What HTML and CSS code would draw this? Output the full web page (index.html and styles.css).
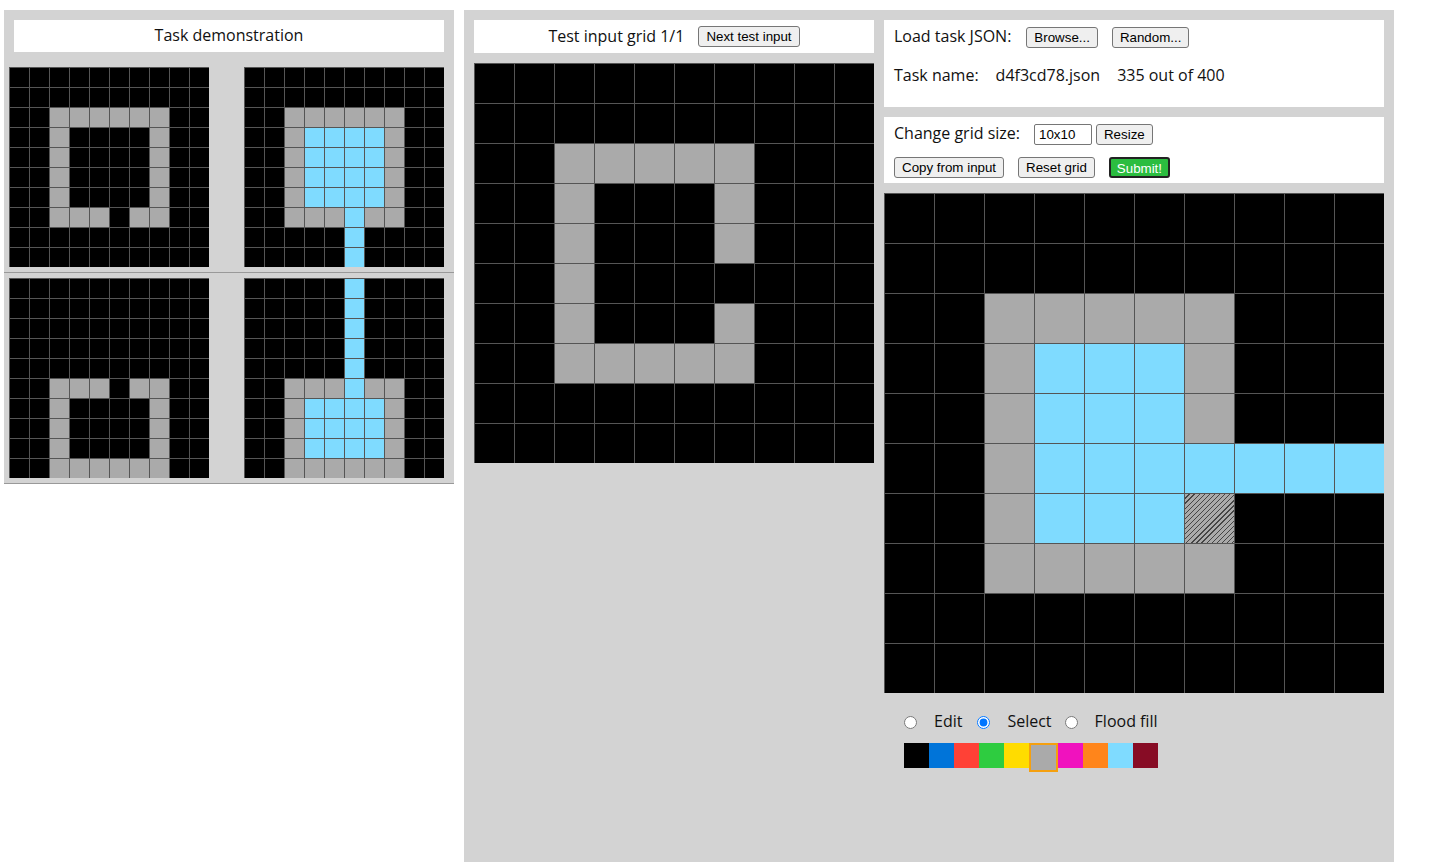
FILE: index.html
```html
<!DOCTYPE html>
<html>
<head>
<meta charset="utf-8">
<title>ARC testing interface</title>
<link rel="stylesheet" href="styles.css">
</head>
<body>
<div class="workspace">
  <section class="demo-panel">
    <div class="demo-title">Task demonstration</div>
    <div class="pair">
      <div class="grid g20">
        <i class="c0"></i><i class="c0"></i><i class="c0"></i><i class="c0"></i><i class="c0"></i><i class="c0"></i><i class="c0"></i><i class="c0"></i><i class="c0"></i><i class="c0"></i>
        <i class="c0"></i><i class="c0"></i><i class="c0"></i><i class="c0"></i><i class="c0"></i><i class="c0"></i><i class="c0"></i><i class="c0"></i><i class="c0"></i><i class="c0"></i>
        <i class="c0"></i><i class="c0"></i><i class="c5"></i><i class="c5"></i><i class="c5"></i><i class="c5"></i><i class="c5"></i><i class="c5"></i><i class="c0"></i><i class="c0"></i>
        <i class="c0"></i><i class="c0"></i><i class="c5"></i><i class="c0"></i><i class="c0"></i><i class="c0"></i><i class="c0"></i><i class="c5"></i><i class="c0"></i><i class="c0"></i>
        <i class="c0"></i><i class="c0"></i><i class="c5"></i><i class="c0"></i><i class="c0"></i><i class="c0"></i><i class="c0"></i><i class="c5"></i><i class="c0"></i><i class="c0"></i>
        <i class="c0"></i><i class="c0"></i><i class="c5"></i><i class="c0"></i><i class="c0"></i><i class="c0"></i><i class="c0"></i><i class="c5"></i><i class="c0"></i><i class="c0"></i>
        <i class="c0"></i><i class="c0"></i><i class="c5"></i><i class="c0"></i><i class="c0"></i><i class="c0"></i><i class="c0"></i><i class="c5"></i><i class="c0"></i><i class="c0"></i>
        <i class="c0"></i><i class="c0"></i><i class="c5"></i><i class="c5"></i><i class="c5"></i><i class="c0"></i><i class="c5"></i><i class="c5"></i><i class="c0"></i><i class="c0"></i>
        <i class="c0"></i><i class="c0"></i><i class="c0"></i><i class="c0"></i><i class="c0"></i><i class="c0"></i><i class="c0"></i><i class="c0"></i><i class="c0"></i><i class="c0"></i>
        <i class="c0"></i><i class="c0"></i><i class="c0"></i><i class="c0"></i><i class="c0"></i><i class="c0"></i><i class="c0"></i><i class="c0"></i><i class="c0"></i><i class="c0"></i>
      </div>
      <div class="grid g20">
        <i class="c0"></i><i class="c0"></i><i class="c0"></i><i class="c0"></i><i class="c0"></i><i class="c0"></i><i class="c0"></i><i class="c0"></i><i class="c0"></i><i class="c0"></i>
        <i class="c0"></i><i class="c0"></i><i class="c0"></i><i class="c0"></i><i class="c0"></i><i class="c0"></i><i class="c0"></i><i class="c0"></i><i class="c0"></i><i class="c0"></i>
        <i class="c0"></i><i class="c0"></i><i class="c5"></i><i class="c5"></i><i class="c5"></i><i class="c5"></i><i class="c5"></i><i class="c5"></i><i class="c0"></i><i class="c0"></i>
        <i class="c0"></i><i class="c0"></i><i class="c5"></i><i class="c8"></i><i class="c8"></i><i class="c8"></i><i class="c8"></i><i class="c5"></i><i class="c0"></i><i class="c0"></i>
        <i class="c0"></i><i class="c0"></i><i class="c5"></i><i class="c8"></i><i class="c8"></i><i class="c8"></i><i class="c8"></i><i class="c5"></i><i class="c0"></i><i class="c0"></i>
        <i class="c0"></i><i class="c0"></i><i class="c5"></i><i class="c8"></i><i class="c8"></i><i class="c8"></i><i class="c8"></i><i class="c5"></i><i class="c0"></i><i class="c0"></i>
        <i class="c0"></i><i class="c0"></i><i class="c5"></i><i class="c8"></i><i class="c8"></i><i class="c8"></i><i class="c8"></i><i class="c5"></i><i class="c0"></i><i class="c0"></i>
        <i class="c0"></i><i class="c0"></i><i class="c5"></i><i class="c5"></i><i class="c5"></i><i class="c8"></i><i class="c5"></i><i class="c5"></i><i class="c0"></i><i class="c0"></i>
        <i class="c0"></i><i class="c0"></i><i class="c0"></i><i class="c0"></i><i class="c0"></i><i class="c8"></i><i class="c0"></i><i class="c0"></i><i class="c0"></i><i class="c0"></i>
        <i class="c0"></i><i class="c0"></i><i class="c0"></i><i class="c0"></i><i class="c0"></i><i class="c8"></i><i class="c0"></i><i class="c0"></i><i class="c0"></i><i class="c0"></i>
      </div>
    </div>
    <div class="pair">
      <div class="grid g20">
        <i class="c0"></i><i class="c0"></i><i class="c0"></i><i class="c0"></i><i class="c0"></i><i class="c0"></i><i class="c0"></i><i class="c0"></i><i class="c0"></i><i class="c0"></i>
        <i class="c0"></i><i class="c0"></i><i class="c0"></i><i class="c0"></i><i class="c0"></i><i class="c0"></i><i class="c0"></i><i class="c0"></i><i class="c0"></i><i class="c0"></i>
        <i class="c0"></i><i class="c0"></i><i class="c0"></i><i class="c0"></i><i class="c0"></i><i class="c0"></i><i class="c0"></i><i class="c0"></i><i class="c0"></i><i class="c0"></i>
        <i class="c0"></i><i class="c0"></i><i class="c0"></i><i class="c0"></i><i class="c0"></i><i class="c0"></i><i class="c0"></i><i class="c0"></i><i class="c0"></i><i class="c0"></i>
        <i class="c0"></i><i class="c0"></i><i class="c0"></i><i class="c0"></i><i class="c0"></i><i class="c0"></i><i class="c0"></i><i class="c0"></i><i class="c0"></i><i class="c0"></i>
        <i class="c0"></i><i class="c0"></i><i class="c5"></i><i class="c5"></i><i class="c5"></i><i class="c0"></i><i class="c5"></i><i class="c5"></i><i class="c0"></i><i class="c0"></i>
        <i class="c0"></i><i class="c0"></i><i class="c5"></i><i class="c0"></i><i class="c0"></i><i class="c0"></i><i class="c0"></i><i class="c5"></i><i class="c0"></i><i class="c0"></i>
        <i class="c0"></i><i class="c0"></i><i class="c5"></i><i class="c0"></i><i class="c0"></i><i class="c0"></i><i class="c0"></i><i class="c5"></i><i class="c0"></i><i class="c0"></i>
        <i class="c0"></i><i class="c0"></i><i class="c5"></i><i class="c0"></i><i class="c0"></i><i class="c0"></i><i class="c0"></i><i class="c5"></i><i class="c0"></i><i class="c0"></i>
        <i class="c0"></i><i class="c0"></i><i class="c5"></i><i class="c5"></i><i class="c5"></i><i class="c5"></i><i class="c5"></i><i class="c5"></i><i class="c0"></i><i class="c0"></i>
      </div>
      <div class="grid g20">
        <i class="c0"></i><i class="c0"></i><i class="c0"></i><i class="c0"></i><i class="c0"></i><i class="c8"></i><i class="c0"></i><i class="c0"></i><i class="c0"></i><i class="c0"></i>
        <i class="c0"></i><i class="c0"></i><i class="c0"></i><i class="c0"></i><i class="c0"></i><i class="c8"></i><i class="c0"></i><i class="c0"></i><i class="c0"></i><i class="c0"></i>
        <i class="c0"></i><i class="c0"></i><i class="c0"></i><i class="c0"></i><i class="c0"></i><i class="c8"></i><i class="c0"></i><i class="c0"></i><i class="c0"></i><i class="c0"></i>
        <i class="c0"></i><i class="c0"></i><i class="c0"></i><i class="c0"></i><i class="c0"></i><i class="c8"></i><i class="c0"></i><i class="c0"></i><i class="c0"></i><i class="c0"></i>
        <i class="c0"></i><i class="c0"></i><i class="c0"></i><i class="c0"></i><i class="c0"></i><i class="c8"></i><i class="c0"></i><i class="c0"></i><i class="c0"></i><i class="c0"></i>
        <i class="c0"></i><i class="c0"></i><i class="c5"></i><i class="c5"></i><i class="c5"></i><i class="c8"></i><i class="c5"></i><i class="c5"></i><i class="c0"></i><i class="c0"></i>
        <i class="c0"></i><i class="c0"></i><i class="c5"></i><i class="c8"></i><i class="c8"></i><i class="c8"></i><i class="c8"></i><i class="c5"></i><i class="c0"></i><i class="c0"></i>
        <i class="c0"></i><i class="c0"></i><i class="c5"></i><i class="c8"></i><i class="c8"></i><i class="c8"></i><i class="c8"></i><i class="c5"></i><i class="c0"></i><i class="c0"></i>
        <i class="c0"></i><i class="c0"></i><i class="c5"></i><i class="c8"></i><i class="c8"></i><i class="c8"></i><i class="c8"></i><i class="c5"></i><i class="c0"></i><i class="c0"></i>
        <i class="c0"></i><i class="c0"></i><i class="c5"></i><i class="c5"></i><i class="c5"></i><i class="c5"></i><i class="c5"></i><i class="c5"></i><i class="c0"></i><i class="c0"></i>
      </div>
    </div>
  </section>

  <section class="eval-panel">
    <div class="input-view">
      <div class="input-title">
        <span class="title-text">Test input grid 1/1</span>
        <button class="btn">Next test input</button>
      </div>
      <div class="grid g40">
        <i class="c0"></i><i class="c0"></i><i class="c0"></i><i class="c0"></i><i class="c0"></i><i class="c0"></i><i class="c0"></i><i class="c0"></i><i class="c0"></i><i class="c0"></i>
        <i class="c0"></i><i class="c0"></i><i class="c0"></i><i class="c0"></i><i class="c0"></i><i class="c0"></i><i class="c0"></i><i class="c0"></i><i class="c0"></i><i class="c0"></i>
        <i class="c0"></i><i class="c0"></i><i class="c5"></i><i class="c5"></i><i class="c5"></i><i class="c5"></i><i class="c5"></i><i class="c0"></i><i class="c0"></i><i class="c0"></i>
        <i class="c0"></i><i class="c0"></i><i class="c5"></i><i class="c0"></i><i class="c0"></i><i class="c0"></i><i class="c5"></i><i class="c0"></i><i class="c0"></i><i class="c0"></i>
        <i class="c0"></i><i class="c0"></i><i class="c5"></i><i class="c0"></i><i class="c0"></i><i class="c0"></i><i class="c5"></i><i class="c0"></i><i class="c0"></i><i class="c0"></i>
        <i class="c0"></i><i class="c0"></i><i class="c5"></i><i class="c0"></i><i class="c0"></i><i class="c0"></i><i class="c0"></i><i class="c0"></i><i class="c0"></i><i class="c0"></i>
        <i class="c0"></i><i class="c0"></i><i class="c5"></i><i class="c0"></i><i class="c0"></i><i class="c0"></i><i class="c5"></i><i class="c0"></i><i class="c0"></i><i class="c0"></i>
        <i class="c0"></i><i class="c0"></i><i class="c5"></i><i class="c5"></i><i class="c5"></i><i class="c5"></i><i class="c5"></i><i class="c0"></i><i class="c0"></i><i class="c0"></i>
        <i class="c0"></i><i class="c0"></i><i class="c0"></i><i class="c0"></i><i class="c0"></i><i class="c0"></i><i class="c0"></i><i class="c0"></i><i class="c0"></i><i class="c0"></i>
        <i class="c0"></i><i class="c0"></i><i class="c0"></i><i class="c0"></i><i class="c0"></i><i class="c0"></i><i class="c0"></i><i class="c0"></i><i class="c0"></i><i class="c0"></i>
      </div>
    </div>

    <div class="editor">
      <div class="box load-box">
        <div class="row">
          <span class="label">Load task JSON:</span>
          <button class="btn">Browse...</button>
          <button class="btn">Random...</button>
        </div>
        <div class="row task-row">
          <span>Task name:</span>
          <span>d4f3cd78.json</span>
          <span>335 out of 400</span>
        </div>
      </div>
      <div class="box size-box">
        <div class="row">
          <span class="label">Change grid size:</span>
          <input class="size-input" type="text" value="10x10">
          <button class="btn resize">Resize</button>
        </div>
        <div class="row btn-row">
          <button class="btn">Copy from input</button>
          <button class="btn">Reset grid</button>
          <button class="btn submit">Submit!</button>
        </div>
      </div>
      <div class="grid g50">
        <i class="c0"></i><i class="c0"></i><i class="c0"></i><i class="c0"></i><i class="c0"></i><i class="c0"></i><i class="c0"></i><i class="c0"></i><i class="c0"></i><i class="c0"></i>
        <i class="c0"></i><i class="c0"></i><i class="c0"></i><i class="c0"></i><i class="c0"></i><i class="c0"></i><i class="c0"></i><i class="c0"></i><i class="c0"></i><i class="c0"></i>
        <i class="c0"></i><i class="c0"></i><i class="c5"></i><i class="c5"></i><i class="c5"></i><i class="c5"></i><i class="c5"></i><i class="c0"></i><i class="c0"></i><i class="c0"></i>
        <i class="c0"></i><i class="c0"></i><i class="c5"></i><i class="c8"></i><i class="c8"></i><i class="c8"></i><i class="c5"></i><i class="c0"></i><i class="c0"></i><i class="c0"></i>
        <i class="c0"></i><i class="c0"></i><i class="c5"></i><i class="c8"></i><i class="c8"></i><i class="c8"></i><i class="c5"></i><i class="c0"></i><i class="c0"></i><i class="c0"></i>
        <i class="c0"></i><i class="c0"></i><i class="c5"></i><i class="c8"></i><i class="c8"></i><i class="c8"></i><i class="c8"></i><i class="c8"></i><i class="c8"></i><i class="c8"></i>
        <i class="c0"></i><i class="c0"></i><i class="c5"></i><i class="c8"></i><i class="c8"></i><i class="c8"></i><i class="c5 sel"></i><i class="c0"></i><i class="c0"></i><i class="c0"></i>
        <i class="c0"></i><i class="c0"></i><i class="c5"></i><i class="c5"></i><i class="c5"></i><i class="c5"></i><i class="c5"></i><i class="c0"></i><i class="c0"></i><i class="c0"></i>
        <i class="c0"></i><i class="c0"></i><i class="c0"></i><i class="c0"></i><i class="c0"></i><i class="c0"></i><i class="c0"></i><i class="c0"></i><i class="c0"></i><i class="c0"></i>
        <i class="c0"></i><i class="c0"></i><i class="c0"></i><i class="c0"></i><i class="c0"></i><i class="c0"></i><i class="c0"></i><i class="c0"></i><i class="c0"></i><i class="c0"></i>
      </div>
      <div class="tools">
        <input class="radio" type="radio" name="tool" id="t-edit">
        <label for="t-edit" class="tool-first">Edit</label>
        <input class="radio" type="radio" name="tool" id="t-select" checked>
        <label for="t-select">Select</label>
        <input class="radio" type="radio" name="tool" id="t-flood">
        <label for="t-flood">Flood fill</label>
      </div>
      <div class="palette">
        <span class="sw c0"></span><span class="sw c1"></span><span class="sw c2"></span><span class="sw c3"></span><span class="sw c4"></span><span class="sw c5 picked"></span><span class="sw c6"></span><span class="sw c7"></span><span class="sw c8"></span><span class="sw c9"></span>
      </div>
    </div>
  </section>
</div>
</body>
</html>
```

FILE: styles.css
```css
html, body {
  margin: 0;
  padding: 0;
  background: #fff;
}

body {
  font-family: "Open Sans", "Noto Sans", sans-serif;
  font-size: 16px;
  color: #111;
}

.workspace {
  display: flex;
  align-items: flex-start;
  gap: 10px;
  padding: 10px 0 0 4px;
}

/* ---------- demonstration panel ---------- */
.demo-panel {
  width: 450px;
  background: #d3d3d3;
  padding-top: 10px;
}

.demo-title {
  margin: 0 10px;
  height: 32px;
  box-sizing: border-box;
  padding-bottom: 2px;
  line-height: 30px;
  background: #fff;
  text-align: center;
}

.pair {
  display: flex;
  justify-content: space-between;
  padding: 5px 10px 5px 5px;
  border-bottom: 1px solid #999;
}

.demo-title + .pair {
  margin-top: 10px;
}

/* ---------- grids ---------- */
.grid {
  display: grid;
  grid-template-columns: repeat(10, 1fr);
  grid-template-rows: repeat(10, 1fr);
  flex: none;
}

.g20 { width: 200px; height: 200px; }
.g40 { width: 400px; height: 400px; }
.g50 { width: 500px; height: 500px; }

.grid i {
  display: block;
  box-sizing: border-box;
  border-top: 1px solid #555;
  border-left: 1px solid #555;
}

.c0 { background: #000; }
.c1 { background: #0074d9; }
.c2 { background: #ff4136; }
.c3 { background: #2ecc40; }
.c4 { background: #ffdc00; }
.c5 { background: #aaaaaa; }
.c6 { background: #f012be; }
.c7 { background: #ff851b; }
.c8 { background: #7fdbff; }
.c9 { background: #870c25; }

.grid i.sel {
  background-color: #aaaaaa;
  background-image: repeating-linear-gradient(135deg, rgba(0,0,0,0) 0 2.7px, rgba(0,0,0,0.6) 2.7px 3.6px);
}

/* ---------- evaluation panel ---------- */
.eval-panel {
  width: 930px;
  height: 852px;
  box-sizing: border-box;
  background: #d3d3d3;
  padding: 10px;
  display: flex;
  align-items: flex-start;
  gap: 10px;
}

.input-view {
  width: 400px;
  display: flex;
  flex-direction: column;
  gap: 10px;
}

.input-title {
  height: 33px;
  background: #fff;
  display: flex;
  align-items: center;
  justify-content: center;
  gap: 14px;
}

.title-text {
  margin-bottom: 2px;
}

.btn {
  font-family: "Liberation Sans", Arial, sans-serif;
  font-size: 13.33px;
  color: #000;
  background: #efefef;
  border: 1px solid #767676;
  border-radius: 3px;
  height: 21px;
  padding: 0 7px;
  margin: 0;
  line-height: 19px;
}

.editor {
  width: 500px;
  display: flex;
  flex-direction: column;
}

.box {
  background: #fff;
  padding: 0 10px;
  box-sizing: border-box;
}

.row {
  display: flex;
  align-items: center;
}

.label {
  margin-bottom: 4px;
}

.load-box {
  height: 87px;
  padding-top: 7px;
  margin-bottom: 10px;
}

.load-box .row:first-child {
  height: 21px;
  gap: 14px;
}

.load-box .label {
  margin-right: 1px;
}

.task-row {
  margin-top: 16px;
  height: 22px;
  gap: 17px;
}

.size-box {
  height: 66px;
  padding-top: 7px;
  margin-bottom: 10px;
}

.size-box .row:first-child {
  height: 21px;
}

.size-input {
  margin: 0 4px 0 14px;
  width: 58px;
  height: 21px;
  box-sizing: border-box;
  border: 1px solid #767676;
  border-radius: 2px;
  padding: 0 4px;
  font-family: "Liberation Sans", Arial, sans-serif;
  font-size: 13.33px;
  color: #000;
}

.btn-row {
  margin-top: 12px;
  height: 21px;
  gap: 14px;
}

.btn.submit {
  background: #2bbd3f;
  color: #fff;
  border: 2px solid #222;
  border-radius: 3px;
  padding: 0 6px;
}

.tools {
  display: flex;
  align-items: center;
  height: 22px;
  margin-top: 17px;
  padding-left: 20px;
}

.radio {
  width: 13px;
  height: 13px;
  margin: 3px 17px 0 0;
}

.tools label {
  margin-right: 13px;
}

.tools label.tool-first {
  margin-right: 15px;
}

.palette {
  display: flex;
  align-items: flex-start;
  margin-top: 11px;
  padding-left: 20px;
}

.sw {
  width: 25px;
  height: 25px;
  box-sizing: border-box;
  flex: none;
}

.sw.picked {
  width: 29px;
  height: 29px;
  border: 2px solid #f5a00f;
}
```
